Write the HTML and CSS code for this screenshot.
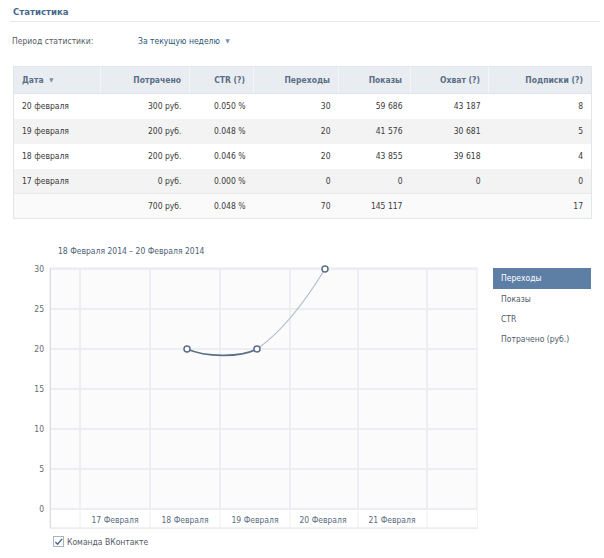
FILE: index.html
```html
<!DOCTYPE html>
<html lang="ru">
<head>
<meta charset="utf-8">
<title>Статистика</title>
<link rel="stylesheet" href="styles.css">
</head>
<body>
<div class="page">
  <div class="title-bar"><span class="title">Статистика</span></div>
  <div class="period">
    <span class="period-label">Период статистики:</span>
    <span class="period-value">За текущую неделю <span class="caret">▼</span></span>
  </div>

  <table class="stats">
    <colgroup>
      <col class="c1"><col class="c2"><col class="c3"><col class="c4"><col class="c5"><col class="c6"><col class="c7">
    </colgroup>
    <thead>
      <tr>
        <th class="left">Дата <span class="caret">▼</span></th>
        <th>Потрачено</th>
        <th>CTR (?)</th>
        <th>Переходы</th>
        <th>Показы</th>
        <th>Охват (?)</th>
        <th>Подписки (?)</th>
      </tr>
    </thead>
    <tbody>
      <tr><td class="left">20 февраля</td><td>300 руб.</td><td>0.050 %</td><td>30</td><td>59 686</td><td>43 187</td><td>8</td></tr>
      <tr class="alt"><td class="left">19 февраля</td><td>200 руб.</td><td>0.048 %</td><td>20</td><td>41 576</td><td>30 681</td><td>5</td></tr>
      <tr><td class="left">18 февраля</td><td>200 руб.</td><td>0.046 %</td><td>20</td><td>43 855</td><td>39 618</td><td>4</td></tr>
      <tr class="alt"><td class="left">17 февраля</td><td>0 руб.</td><td>0.000 %</td><td>0</td><td>0</td><td>0</td><td>0</td></tr>
      <tr class="total"><td class="left"></td><td>700 руб.</td><td>0.048 %</td><td>70</td><td>145 117</td><td></td><td>17</td></tr>
    </tbody>
  </table>

  <div class="chart-section">
    <svg class="chart" width="480" height="290" viewBox="0 0 480 290">
      <text class="range" x="58" y="14">18 Февраля 2014 – 20 Февраля 2014</text>
      <rect x="50" y="28" width="427" height="260" fill="#fbfbfc" stroke="#e6e8eb"/>
      <g stroke="#eceef1" stroke-width="2">
        <line x1="50" y1="29" x2="477" y2="29"/>
        <line x1="50" y1="69" x2="477" y2="69"/>
        <line x1="50" y1="109" x2="477" y2="109"/>
        <line x1="50" y1="149" x2="477" y2="149"/>
        <line x1="50" y1="189" x2="477" y2="189"/>
        <line x1="50" y1="229" x2="477" y2="229"/>
        <line x1="50" y1="269" x2="477" y2="269"/>
        <line x1="80" y1="28" x2="80" y2="288"/>
        <line x1="150" y1="28" x2="150" y2="288"/>
        <line x1="220" y1="28" x2="220" y2="288"/>
        <line x1="290" y1="28" x2="290" y2="288"/>
        <line x1="358" y1="28" x2="358" y2="288"/>
        <line x1="427" y1="28" x2="427" y2="288"/>
      </g>
      <rect x="50" y="270" width="427" height="18" fill="#ffffff"/>
      <g stroke="#eceef1" stroke-width="1">
        <line x1="80" y1="270" x2="80" y2="288"/>
        <line x1="150" y1="270" x2="150" y2="288"/>
        <line x1="220" y1="270" x2="220" y2="288"/>
        <line x1="290" y1="270" x2="290" y2="288"/>
        <line x1="358" y1="270" x2="358" y2="288"/>
        <line x1="427" y1="270" x2="427" y2="288"/>
      </g>
      <line x1="50" y1="288" x2="477" y2="288" stroke="#e2e5e9"/>
      <line x1="50.5" y1="28" x2="50.5" y2="288" stroke="#dadde1"/>
      <g class="ylab" text-anchor="end">
        <text x="44" y="32">30</text>
        <text x="44" y="72">25</text>
        <text x="44" y="112">20</text>
        <text x="44" y="152">15</text>
        <text x="44" y="192">10</text>
        <text x="44" y="232">5</text>
        <text x="44" y="272">0</text>
      </g>
      <g class="xlab" text-anchor="middle">
        <text x="115" y="283">17 Февраля</text>
        <text x="185" y="283">18 Февраля</text>
        <text x="255" y="283">19 Февраля</text>
        <text x="323" y="283">20 Февраля</text>
        <text x="392" y="283">21 Февраля</text>
      </g>
      <path d="M257,109 C282,92 306,60 325,29" fill="none" stroke="#b3bfcc" stroke-width="1.2"/>
      <path d="M187,109 C205,117 240,118 257,109" fill="none" stroke="#5b6f88" stroke-width="1.6"/>
      <g fill="#ffffff" stroke="#5b6f88" stroke-width="1.5">
        <circle cx="187" cy="109" r="3"/>
        <circle cx="257" cy="109" r="3"/>
        <circle cx="325" cy="29" r="3"/>
      </g>
    </svg>
    <ul class="legend">
      <li class="active">Переходы</li>
      <li>Показы</li>
      <li>CTR</li>
      <li>Потрачено (руб.)</li>
    </ul>
  </div>

  <label class="check">
    <span class="box"><svg width="10" height="10" viewBox="0 0 10 10"><path d="M1.5,5 L4,7.5 L9,1.5" fill="none" stroke="#45688e" stroke-width="1.6"/></svg></span>
    <span class="check-text">Команда ВКонтакте</span>
  </label>
</div>
</body>
</html>
```

FILE: styles.css
```css
* { box-sizing: border-box; }
body {
  margin: 0;
  background: #ffffff;
  font-family: "DejaVu Sans Condensed", "DejaVu Sans", sans-serif;
  font-stretch: condensed;
  font-size: 8.5px;
  color: #333333;
}
.page {
  padding: 5px 4px 0 10px;
}
.title-bar {
  padding: 1px 0 4px 3px;
  border-bottom: 1px solid #e4e8ed;
}
.title {
  font-size: 9.5px;
  font-weight: bold;
  color: #45688e;
}
.period {
  display: flex;
  padding: 14px 0 0 2px;
  height: 44px;
}
.period-label {
  width: 126px;
  color: #555b63;
}
.period-value {
  color: #2b587a;
}
.caret {
  font-size: 6px;
  color: #7d8ea3;
  vertical-align: 1px;
  margin-left: 3px;
}
.stats {
  margin-left: 3px;
  width: 578px;
  border-collapse: collapse;
  table-layout: fixed;
  border: 1px solid #e1e6eb;
}
.c1 { width: 87px; }
.c2 { width: 89px; }
.c3 { width: 64px; }
.c4 { width: 85px; }
.c5 { width: 72px; }
.c6 { width: 78px; }
.c7 { width: 103px; }
.stats th {
  height: 27px;
  background: #e9edf1;
  color: #5a6e86;
  font-weight: bold;
  text-align: right;
  padding: 0 8px;
  border-left: 1px solid #f3f5f7;
  border-bottom: 1px solid #dfe4ea;
}
.stats th:first-child { border-left: none; }
.stats td {
  height: 25px;
  text-align: right;
  padding: 0 8px;
  color: #3a3a3a;
}
.stats .left { text-align: left; padding-left: 8px; }
.stats tr.alt td { background: #f3f3f4; }
.stats tr.total td {
  border-top: 1px solid #e6e8ea;
  background: #fafafb;
}
.chart-section {
  display: flex;
  margin-top: 21px;
  margin-left: -10px;
}
.chart { display: block; flex: none; }
.chart text {
  font-family: "DejaVu Sans Condensed", "DejaVu Sans", sans-serif;
  font-stretch: condensed;
  font-size: 8.5px;
}
.chart .range { fill: #4e6178; }
.chart .ylab text { fill: #666a70; }
.chart .xlab text { fill: #5a6b80; }
.legend {
  list-style: none;
  margin: 28px 0 0 13px;
  padding: 0;
  width: 98px;
}
.legend li {
  height: 20px;
  line-height: 20px;
  padding-left: 8px;
  color: #4f5b68;
}
.legend li.active {
  height: 21px;
  line-height: 21px;
  background: #5d7fa6;
  color: #ffffff;
}
.check {
  display: flex;
  align-items: center;
  margin: 6px 0 0 43px;
  color: #555b63;
}
.box {
  display: flex;
  width: 11px;
  height: 11px;
  border: 1px solid #aab4c0;
  background: #fff;
  margin-right: 3px;
  align-items: center;
  justify-content: center;
}
```
